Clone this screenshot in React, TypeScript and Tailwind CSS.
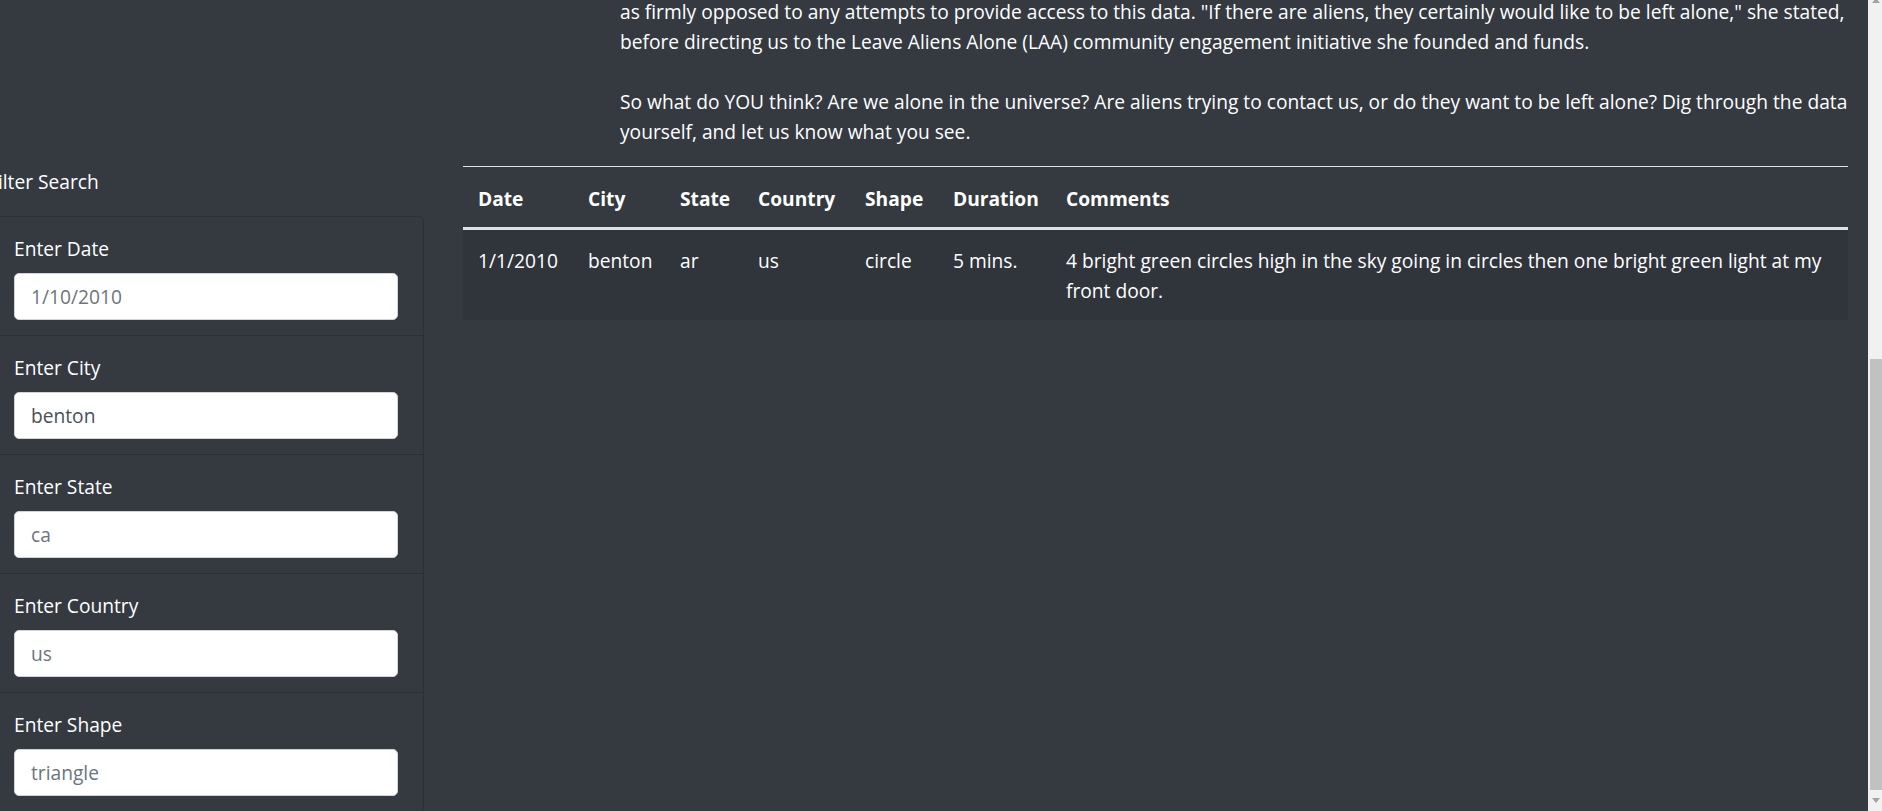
import React from "react";

const fields = [
  { label: "Enter Date", value: "", placeholder: "1/10/2010" },
  { label: "Enter City", value: "benton", placeholder: "" },
  { label: "Enter State", value: "", placeholder: "ca" },
  { label: "Enter Country", value: "", placeholder: "us" },
  { label: "Enter Shape", value: "", placeholder: "triangle" },
];

const headers = ["Date", "City", "State", "Country", "Shape", "Duration", "Comments"];

function FilterItem({ label, value, placeholder, last }: { label: string; value: string; placeholder: string; last: boolean }) {
  return (
    <li className={`px-[25px] pt-[16px] pb-[15px] ${last ? "" : "border-b border-[#2b3036]"}`}>
      <label className="block mb-[10px] pt-[1px] leading-[29px] text-white">{label}</label>
      <input
        type="text"
        defaultValue={value}
        placeholder={placeholder}
        className="block w-full h-[47px] bg-white border border-[#ced4da] rounded-[5px] pl-[16px] pr-[15px] text-[19.2px] text-[#495057] placeholder:text-[#6c757d] outline-none"
      />
    </li>
  );
}

export default function App() {
  return (
    <div className="flex w-full h-[811px] overflow-hidden font-['Open_Sans',sans-serif] text-[19.2px] leading-[30px]">
      <div className="flex-1 min-w-0 bg-[#343a40] text-white overflow-hidden">
        <p className="ml-[620px] w-[1232px] mt-[-3px] mb-[19px]">
          as firmly opposed to any attempts to provide access to this data. "If there are aliens, they certainly would like to be left alone," she stated,
          <br />
          before directing us to the Leave Aliens Alone (LAA) community engagement initiative she founded and funds.
          <br />
          <br />
          So what do YOU think? Are we alone in the universe? Are aliens trying to contact us, or do they want to be left alone? Dig through the data
          <br />
          yourself, and let us know what you see.
        </p>
        <div className="flex items-start">
          <aside className="ml-[-12px] w-[436px] shrink-0">
            <h5 className="pt-[1px] leading-[30px] mb-[19px]">Filter Search</h5>
            <ul className="border border-[#2b3036] rounded-[5px]">
              {fields.map((f, i) => (
                <FilterItem key={f.label} {...f} last={i === fields.length - 1} />
              ))}
            </ul>
          </aside>
          <div className="ml-[39px] w-[1385px] shrink-0">
            <table className="w-full table-fixed border-collapse border-t border-[#dee2e6]">
              <colgroup>
                <col className="w-[110px]" />
                <col className="w-[92px]" />
                <col className="w-[78px]" />
                <col className="w-[107px]" />
                <col className="w-[88px]" />
                <col className="w-[113px]" />
                <col />
              </colgroup>
              <thead>
                <tr className="border-b-[3px] border-[#dee2e6]">
                  {headers.map((h) => (
                    <th key={h} className="px-[15px] pt-[17px] pb-[13px] text-left font-bold align-bottom">
                      {h}
                    </th>
                  ))}
                </tr>
              </thead>
              <tbody>
                <tr className="bg-[#30353b]">
                  <td className="px-[15px] pt-[16px] pb-[14px] align-top">1/1/2010</td>
                  <td className="px-[15px] pt-[16px] pb-[14px] align-top">benton</td>
                  <td className="px-[15px] pt-[16px] pb-[14px] align-top">ar</td>
                  <td className="px-[15px] pt-[16px] pb-[14px] align-top">us</td>
                  <td className="px-[15px] pt-[16px] pb-[14px] align-top">circle</td>
                  <td className="px-[15px] pt-[16px] pb-[14px] align-top">5 mins.</td>
                  <td className="px-[15px] pt-[16px] pb-[14px] align-top">
                    4 bright green circles high in the sky going in circles then one bright green light at my front door.
                  </td>
                </tr>
              </tbody>
            </table>
          </div>
        </div>
      </div>
      <div className="w-[14px] shrink-0 bg-[#f1f1f1] flex flex-col">
        <div className="h-[359px] flex justify-center items-start">
          <div className="mt-[-2px] ml-[2px] w-0 h-0 border-l-[4px] border-r-[4px] border-b-[5px] border-l-transparent border-r-transparent border-b-[#a3a3a3]" />
        </div>
        <div className="h-[431px] ml-[2px] bg-[#c1c1c1]" />
        <div className="flex-1 flex justify-center items-center">
          <div className="ml-[2px] w-0 h-0 border-l-[4px] border-r-[4px] border-t-[5px] border-l-transparent border-r-transparent border-t-[#a3a3a3]" />
        </div>
      </div>
    </div>
  );
}
